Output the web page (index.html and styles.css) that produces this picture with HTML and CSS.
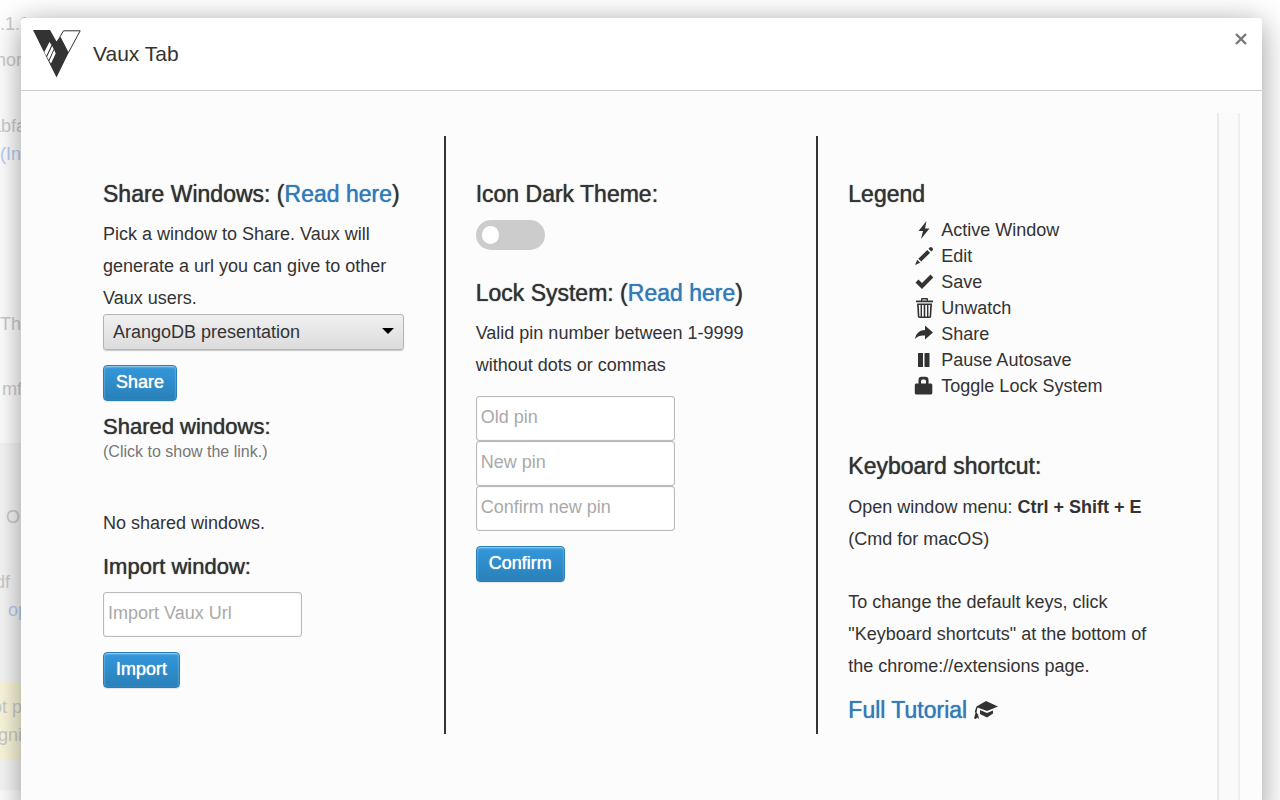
FILE: index.html
```html
<!DOCTYPE html>
<html lang="en">
<head>
    <meta charset="UTF-8">
    <meta name="viewport" content="width=device-width, initial-scale=1.0">
    <title>Vaux Tab</title>
    <link rel="stylesheet" href="styles.css">
</head>
<body>
    <!-- Page behind the modal -->
    <div class="page-behind" aria-hidden="true">
        <p class="line-version">.1.2.1</p>
        <p class="line-author">hor</p>
        <p class="line-tab">abfa</p>
        <p class="line-link">(Ina</p>
        <p class="line-the">The</p>
        <p class="line-mf">mf</p>
        <div class="behind-panel">
            <p class="line-o">O</p>
            <p class="line-df">df</p>
            <p class="line-op">op</p>
            <div class="behind-note">
                <p>ot p</p>
                <p>gni</p>
            </div>
        </div>
    </div>

    <main class="modal">
        <header class="modal-header">
            <svg class="logo" viewBox="0 0 48 48" aria-hidden="true">
                <path fill="#333" d="M0 0H17L23.500 11.500L27 6.500L35.500 23L23.500 47.500Z"/>
                <path fill="#fff" stroke="#333" d="M30.500 .8H47.200L35.300 22.800L27 6.800Z"/>
                <path fill="#fff" d="M16.500 12L18.500 15L13.200 26L11.300 22ZM19.200 16L20.700 19L15.700 30L14 27ZM21.200 20L22.700 23.500L18 33.500L16.300 31Z"/>
            </svg>
            <h1 class="modal-title">Vaux Tab</h1>
            <button class="close" type="button" aria-label="Close">
                <svg viewBox="0 0 12 12"><path d="M1 1L11 11M11 1L1 11" stroke="#777" stroke-width="2.400" fill="none"/></svg>
            </button>
        </header>

        <div class="modal-body">
            <div class="columns">
                <section class="column">
                    <h3><label for="window">Share Windows:</label> (<a href="#share-help">Read here</a>)</h3>
                    <p>Pick a window to Share. Vaux will generate a url you can give to other Vaux users.</p>
                    <div class="select-wrap">
                        <select id="window">
                            <option>ArangoDB presentation</option>
                        </select>
                    </div>
                    <button class="btn" type="button">Share</button>
                    <h4>Shared windows:</h4>
                    <small>(Click to show the link.)</small>
                    <p class="shared-list">No shared windows.</p>
                    <h4 class="import-title"><label for="importUrl">Import window:</label></h4>
                    <input class="field" id="importUrl" type="text" placeholder="Import Vaux Url">
                    <button class="btn" type="button">Import</button>
                </section>

                <section class="column">
                    <h3><label for="darkTheme">Icon Dark Theme:</label></h3>
                    <input class="switch" id="darkTheme" type="checkbox">
                    <h3 class="lock-title">Lock System: (<a href="#lock-help">Read here</a>)</h3>
                    <p>Valid pin number between 1-9999 without dots or commas</p>
                    <form class="pins">
                        <input class="field" type="text" aria-label="Old pin" placeholder="Old pin">
                        <input class="field" type="text" aria-label="New pin" placeholder="New pin">
                        <input class="field" type="text" aria-label="Confirm new pin" placeholder="Confirm new pin">
                        <button class="btn" type="button">Confirm</button>
                    </form>
                </section>

                <section class="column">
                    <h3>Legend</h3>
                    <ul class="legend">
                        <li><svg viewBox="0 0 20 20"><path d="M12.500 1L4.500 11H9L7 19L15.500 8.500H11Z"/></svg>Active Window</li>
                        <li><svg viewBox="0 0 20 20"><path d="M14.500 2.800L16 1.300Q17 .6 18.200 1.800Q19.600 3.200 18.600 4.200L17.200 5.600ZM13.300 4L16.100 6.800L7.200 15.600L4.300 12.800ZM3.300 13.800L6.200 16.700L1 19Z"/></svg>Edit</li>
                        <li><svg viewBox="0 0 20 20"><path d="M1.500 10.500L4.500 7.500L8 11L16.500 2.500L19.300 5.500L8 17Z"/></svg>Save</li>
                        <li><svg viewBox="0 0 20 20"><path fill-rule="evenodd" d="M7 2.500V1Q7 0 8 0H13Q14 0 14 1V2.500H19V4.200H2V2.500ZM8.300 2.500H12.700V1.400H8.300ZM3 5.500H18L17.200 18.500Q17 20 15.500 20H5.500Q4 20 3.800 18.500ZM4.800 7L5.400 18.500H6.600V7ZM8 7V18.500H9.700V7ZM11.300 7V18.500H13V7ZM14.400 7V18.500H15.600L16.200 7Z"/></svg>Unwatch</li>
                        <li><svg viewBox="0 0 20 20"><path d="M1 15C2 9 6 6 11 6V1.500L19 8.500L11 15.500V11.500C7 11 3.500 12 1 15Z"/></svg>Share</li>
                        <li><svg viewBox="0 0 20 20"><path d="M4 3H9V17H4ZM10.500 3H15.500V17H10.500Z"/></svg>Pause Autosave</li>
                        <li><svg viewBox="0 0 20 20"><path fill-rule="evenodd" d="M4.500 7.500V4Q4.500 .8 7.500 .8H11.500Q14.500 .8 14.500 4V7.500H17Q18.300 7.500 18.300 9V17Q18.300 18.500 16.500 18.500H2.500Q.8 18.500 .8 17V9Q.8 7.500 2 7.500ZM7 7.500H12V5Q12 3.500 10.500 3.500H8.500Q7 3.500 7 5Z"/></svg>Toggle Lock System</li>
                    </ul>
                    <h3 class="keys-title">Keyboard shortcut:</h3>
                    <p>Open window menu: <strong>Ctrl + Shift + E</strong> (Cmd for macOS)</p>
                    <p class="keys-note">To change the default keys, click "Keyboard shortcuts" at the bottom of the chrome://extensions page.</p>
                    <h3 class="tutorial">
                        <a href="#tutorial">Full Tutorial</a>
                        <svg viewBox="0 0 24 20"><path d="M12 1L24 6.500L13 11L3.500 7.500L2.500 12.500L4 14.500L5 19L3 17.500L2 19L0 18.500L1.500 13L.8 11.500L2.500 6.500ZM6 10L13 13L19 10.500V13.500L13 17.500L6 14Z"/></svg>
                    </h3>
                </section>
            </div>
            <div class="track"></div>
        </div>
    </main>
</body>
</html>
```
FILE: styles.css
```css
* {
    box-sizing: border-box;
}
body {
    margin: 0;
    height: 100vh;
    overflow: hidden;
    background: #fff;
    color: #333;
    font-family: "Liberation Sans", Arial, sans-serif;
    font-size: 18px;
    line-height: 32px;
}
h1, h3, h4, p, ul {
    margin: 0;
    font-weight: 400;
}
a {
    color: #337ab7;
    text-decoration: none;
}

/* faded page under the modal */
.page-behind {
    position: absolute;
    top: 0;
    left: 0;
    width: 26px;
    height: 100%;
    overflow: hidden;
    color: #ccc;
    white-space: nowrap;
}
.page-behind p {
    display: flex;
    justify-content: flex-end;
    padding-right: 4px;
    line-height: 28px;
}
.page-behind .line-version {
    justify-content: flex-start;
    margin-top: 10px;
}
.line-author {
    margin-top: 8px;
}
.page-behind .line-tab {
    margin-top: 38px;
    padding-right: 0;
}
.page-behind .line-link {
    justify-content: flex-start;
    color: #b9cdf0;
}
.page-behind .line-the {
    justify-content: flex-start;
    margin-top: 142px;
}
.line-mf {
    margin-top: 37px;
}
.behind-panel {
    margin-top: 40px;
    padding-top: 60px;
    height: 347px;
    background: #f7f7f7;
}
.page-behind .line-o {
    padding-right: 6px;
}
.page-behind .line-df {
    margin-top: 37px;
    padding-right: 16px;
}
.page-behind .line-op {
    justify-content: flex-start;
    padding-left: 8px;
    color: #b9cdf0;
}
.behind-note {
    margin-top: 58px;
    padding: 11px 0;
    background: #fbf8dc;
}

.modal {
    position: relative;
    display: flex;
    flex-direction: column;
    min-height: 100vh;
    margin: 18px 18px 0 21px;
    background: #fcfcfc;
    border-radius: 4px;
    box-shadow: 0 5px 30px rgba(0, 0, 0, 0.4);
}
.modal-header {
    display: flex;
    align-items: flex-start;
    height: 73px;
    padding: 12px 15px 0 12px;
    background: #fff;
    border-bottom: 1px solid #ccc;
    border-radius: 4px 4px 0 0;
}
.logo {
    width: 48px;
    height: 48px;
}
.modal-title {
    flex: 1;
    padding-left: 12px;
    font-size: 21px;
    line-height: 48px;
}
.close {
    width: 12px;
    height: 12px;
    margin-top: 3px;
    padding: 0;
    border: 0;
    background: none;
    line-height: 0;
    cursor: pointer;
}
.modal-body {
    display: flex;
    flex: 1;
    padding: 22px 22px 0;
}
.columns {
    display: grid;
    grid-template-columns: repeat(3, 1fr);
    align-items: stretch;
    align-self: flex-start;
    flex: 1;
    padding: 23px 26px 0 30px;
}
.column {
    padding: 45px 30px 46px;
    border-right: 2px solid #333;
}
.column:last-child {
    padding-right: 24px;
    padding-bottom: 10px;
    border-right: 0;
}
.track {
    width: 23px;
    background: #fafafa;
    border-left: 2px solid #eaeaea;
    border-right: 2px solid #eee;
}

h3 {
    margin-bottom: 11px;
    font-size: 23px;
    line-height: 26px;
    text-shadow: 0 0 1px currentColor;
}
h4 {
    margin-top: 14px;
    font-size: 22px;
    line-height: 24px;
    text-shadow: 0 0 1px currentColor;
}
small {
    display: block;
    margin-top: 3px;
    color: #777;
    font-size: 16px;
    line-height: 20px;
}
.shared-list {
    margin-top: 45px;
}
.import-title {
    margin: 16px 0 13px;
}

.select-wrap {
    position: relative;
}
.select-wrap::after {
    content: "";
    position: absolute;
    top: 14px;
    right: 20px;
    border: 6px solid transparent;
    border-top-color: #000;
    border-bottom: 0;
    pointer-events: none;
}
select {
    display: block;
    width: 301px;
    max-width: 100%;
    height: 36px;
    padding: 0 9px;
    appearance: none;
    color: #333;
    font: inherit;
    background: linear-gradient(#f0f0f0, #dcdcdc);
    border: 1px solid #b5b5b5;
    border-radius: 3px;
    box-shadow: 0 1px 1px rgba(0, 0, 0, 0.2);
}
.btn {
    display: block;
    height: 36px;
    margin-top: 15px;
    padding: 0 12px 2px;
    color: #fff;
    font: inherit;
    text-shadow: 0 0 1px #fff;
    background: linear-gradient(#3498db, #2980b9);
    border: 1px solid #2980b9;
    border-radius: 4px;
    box-shadow: inset 0 1px 2px rgba(255, 255, 255, 0.6), 0 1px 1px rgba(0, 0, 0, 0.1);
    cursor: pointer;
}
.field {
    display: block;
    width: 199px;
    height: 45px;
    padding: 0 4px 3px;
    color: #333;
    font: inherit;
    background: #fff;
    border: 1px solid #bbb;
    border-radius: 3px;
    box-shadow: inset 0 0 1px #bbb;
}
.field::placeholder {
    color: #a9a9a9;
}

.switch {
    display: flex;
    align-items: center;
    width: 69px;
    height: 30px;
    margin: 13px 0 0;
    padding: 0 6px;
    appearance: none;
    background: #ccc;
    border-radius: 15px;
    cursor: pointer;
}
.switch::before {
    content: "";
    width: 17px;
    height: 18px;
    background: #fff;
    border-radius: 9px;
}
.switch:checked {
    justify-content: flex-end;
    background: #3498db;
}
.lock-title {
    margin-top: 30px;
}
.pins {
    margin-top: 15px;
}

.legend {
    margin: 10px 0 0 66px;
    padding: 0;
    list-style: none;
    line-height: 26px;
}
h3 + .legend {
    margin-top: -1px;
}
.legend li {
    display: flex;
    align-items: center;
    gap: 7px;
}
.legend svg {
    width: 20px;
    height: 20px;
    fill: #333;
}
.keys-title {
    margin: 54px 0 12px;
}
.keys-note {
    margin-top: 31px;
}
.tutorial {
    display: flex;
    align-items: center;
    gap: 7px;
    margin: 15px 0 0;
}
.tutorial svg {
    width: 24px;
    height: 20px;
    fill: #333;
}
```
